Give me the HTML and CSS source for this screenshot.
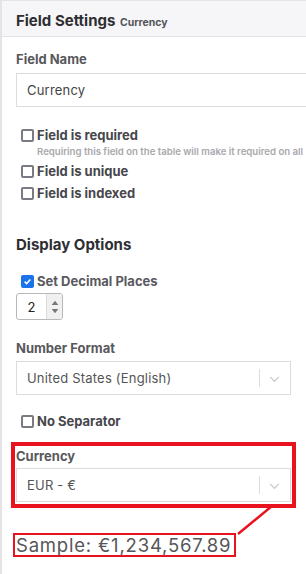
FILE: index.html
```html
<!DOCTYPE html>
<html lang="en">
<head>
  <meta charset="UTF-8" />
  <title>Field Settings</title>
  <link rel="stylesheet" href="styles.css">
</head>
<body>
  <div class="panel">
    <div class="panel-head">
      <span class="panel-title">Field Settings</span>
      <span class="panel-sub">Currency</span>
    </div>

    <div class="panel-body">
      <label class="field-label">Field Name</label>
      <div class="text-input wide">Currency</div>

      <div class="checks">
        <div class="check-row"><span class="box"></span>Field is required</div>
        <div class="help">Requiring this field on the table will make it required on all</div>
        <div class="check-row"><span class="box"></span>Field is unique</div>
        <div class="check-row"><span class="box"></span>Field is indexed</div>
      </div>

      <h2 class="section">Display Options</h2>

      <div class="check-row soft">
        <span class="box checked">
          <svg viewBox="0 0 12 12" width="11" height="11"><path d="M2.2 6.2 L4.8 8.8 L9.8 3.2" fill="none" stroke="#fff" stroke-width="2"/></svg>
        </span>Set Decimal Places
      </div>
      <div class="number-input">
        <span class="num">2</span>
        <span class="spin">
          <svg viewBox="0 0 8 6" width="8" height="5"><path d="M0 6 L4 1 L8 6 Z" fill="#777"/></svg>
          <svg viewBox="0 0 8 6" width="8" height="5"><path d="M0 0 L4 5 L8 0 Z" fill="#777"/></svg>
        </span>
      </div>

      <label class="field-label format">Number Format</label>
      <div class="select">
        <span>United States (English)</span>
        <span class="sep"></span>
        <svg class="chev" viewBox="0 0 12 8" width="11" height="7"><path d="M1 1 L6 6 L11 1" fill="none" stroke="#ccc" stroke-width="1.5"/></svg>
      </div>

      <div class="check-row sep-row"><span class="box"></span>No Separator</div>

      <div class="highlight">
        <label class="field-label cur">Currency</label>
        <div class="select">
          <span>EUR - €</span>
          <span class="sep"></span>
          <svg class="chev" viewBox="0 0 12 8" width="11" height="7"><path d="M1 1 L6 6 L11 1" fill="none" stroke="#ccc" stroke-width="1.5"/></svg>
        </div>
      </div>

      <div class="sample">Sample: €1,234,567.89</div>
    </div>

    <!-- annotation connector -->
    <svg class="connector" width="306" height="574" viewBox="0 0 306 574">
      <path d="M272 506 L238 534" stroke="#e8131f" stroke-width="2.5" fill="none"/>
    </svg>
  </div>
</body>
</html>
```

FILE: styles.css
```css
body {
  margin: 0;
  overflow: hidden;
  background: #fff;
  font-family: Inter, "Open Sans", sans-serif;
  color: #333;
}
.panel {
  position: relative;
  width: 420px;
  height: 574px;
  border-left: 2px solid #e4e4e6;
  border-top: 1px solid #e4e4e6;
  box-sizing: border-box;
}
.panel-head {
  height: 36px;
  background: #f6f6f8;
  border-bottom: 1px solid #e2e2e4;
  box-sizing: border-box;
  padding: 9px 0 0 14px;
}
.panel-title {
  font-size: 15px;
  font-weight: 700;
  color: #2e2e33;
}
.panel-sub {
  font-size: 10.5px;
  font-weight: 700;
  color: #55555a;
}
.panel-body {
  padding: 14px 0 0 14px;
}
.field-label {
  display: block;
  font-size: 13px;
  font-weight: 700;
  color: #58585c;
  line-height: 17px;
}
.text-input {
  margin-top: 5px;
  height: 34px;
  border: 1px solid #dcdcdc;
  box-sizing: border-box;
  padding: 0 10px;
  display: flex;
  align-items: center;
  font-size: 13px;
  color: #444;
  letter-spacing: 0.2px;
}
.text-input.wide {
  width: 400px;
}
.checks {
  margin-top: 19px;
}
.check-row {
  display: flex;
  align-items: center;
  gap: 3px;
  height: 18px;
  font-size: 13px;
  font-weight: 700;
  color: #47474c;
  margin-left: 5px;
}
.box {
  width: 13px;
  height: 13px;
  border: 2px solid #7c7a84;
  border-radius: 2px;
  box-sizing: border-box;
  display: inline-flex;
  align-items: center;
  justify-content: center;
}
.box.checked {
  background: #1a73e8;
  border-color: #1a73e8;
}
.help {
  font-size: 9.6px;
  font-weight: 600;
  color: #a8a8ac;
  margin: 1px 0 4px 21px;
  white-space: nowrap;
  line-height: 13px;
}
.checks .check-row + .check-row {
  margin-top: 4px;
}
.section {
  font-size: 15px;
  font-weight: 700;
  color: #2e2e33;
  margin: 33px 0 0 0;
  line-height: 20px;
}
.check-row.soft {
  margin-top: 17px;
  color: #5a5a5f;
}
.number-input {
  margin-top: 3px;
  width: 47px;
  height: 27px;
  border: 1px solid #b8b8b8;
  border-radius: 3px;
  box-sizing: border-box;
  display: flex;
  overflow: hidden;
}
.num {
  flex: 1;
  font-size: 13px;
  color: #222;
  display: flex;
  align-items: center;
  justify-content: center;
}
.spin {
  width: 15px;
  background: #f0f0f0;
  border-left: 1px solid #ddd;
  display: flex;
  flex-direction: column;
  align-items: center;
  justify-content: center;
  gap: 4px;
}
.field-label.format {
  margin-top: 20px;
}
.select {
  margin-top: 4px;
  width: 275px;
  height: 34px;
  border: 1px solid #dcdcdc;
  box-sizing: border-box;
  display: flex;
  align-items: center;
  padding-left: 10px;
  font-size: 13px;
  color: #555;
  letter-spacing: 0.2px;
}
.select span:first-child {
  flex: 1;
}
.sep {
  width: 1px;
  height: 18px;
  background: #ddd;
}
.chev {
  margin: 2px 10px 0 9px;
}
.sep-row {
  margin-top: 17px;
}
.highlight {
  margin: 12px 0 0 -5px;
  width: 285px;
  border: 4px solid #e8131f;
  box-sizing: border-box;
  padding: 2px 0 2px 1px;
}
.field-label.cur {
  line-height: 16px;
}
.highlight .select {
  margin-top: 4px;
}
.sample {
  width: fit-content;
  margin: 25px 0 0 -3px;
  border: 2px solid #e8131f;
  padding: 0 3px 0 1px;
  font-size: 18.5px;
  line-height: 20px;
  letter-spacing: 0.8px;
  color: #56565a;
}
.connector {
  position: absolute;
  left: -2px;
  top: -1px;
  pointer-events: none;
}
```
